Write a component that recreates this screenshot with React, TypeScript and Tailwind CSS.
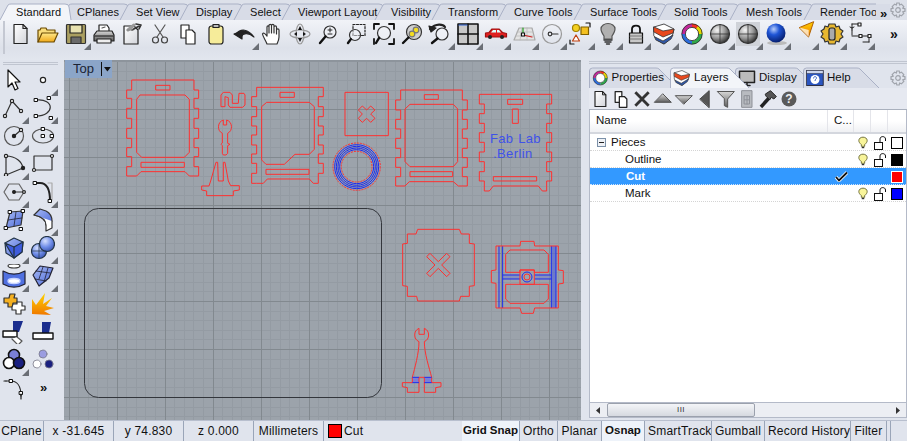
import React from "react";

const Defs = () => (
  <svg className="absolute w-0 h-0">
    <defs>
      <radialGradient id="gs" cx="35%" cy="30%" r="75%"><stop offset="0" stopColor="#f4f4f4" /><stop offset="0.55" stopColor="#9a9a9a" /><stop offset="1" stopColor="#2c2c2c" /></radialGradient>
      <radialGradient id="bs" cx="38%" cy="30%" r="75%"><stop offset="0" stopColor="#b7cdfb" /><stop offset="0.4" stopColor="#1f55d6" /><stop offset="1" stopColor="#041a66" /></radialGradient>
      <radialGradient id="ls" cx="38%" cy="30%" r="75%"><stop offset="0" stopColor="#d6e0ff" /><stop offset="0.55" stopColor="#6f8de8" /><stop offset="1" stopColor="#3a55b0" /></radialGradient>
      <linearGradient id="yl" x1="0" y1="0" x2="0" y2="1"><stop offset="0" stopColor="#ffe98a" /><stop offset="1" stopColor="#f0a818" /></linearGradient>
      <linearGradient id="wh" x1="0" y1="0" x2="1" y2="1"><stop offset="0" stopColor="#ffffff" /><stop offset="1" stopColor="#d2d4da" /></linearGradient>
      <linearGradient id="fl" x1="0" y1="0" x2="0" y2="1"><stop offset="0" stopColor="#ffd400" /><stop offset="1" stopColor="#f07800" /></linearGradient>
      <linearGradient id="bl" x1="0" y1="0" x2="1" y2="1"><stop offset="0" stopColor="#a8bbf5" /><stop offset="1" stopColor="#4c69d8" /></linearGradient>
      <linearGradient id="gr" x1="0" y1="0" x2="0" y2="1"><stop offset="0" stopColor="#d8d8d8" /><stop offset="1" stopColor="#5c5c5c" /></linearGradient>
    </defs>
  </svg>
);

const I = ({ children, s = 24 }: { children: React.ReactNode; s?: number }) => (
  <svg viewBox="0 0 24 24" width={s} height={s} fill="none" stroke="#222" strokeWidth="1.2" strokeLinejoin="round" strokeLinecap="round">
    {children}
  </svg>
);

const Mag = ({ x = 14, y = 10, r = 6 }: { x?: number; y?: number; r?: number }) => (
  <>
    <circle cx={x} cy={y} r={r} fill="#f4f6fa" fillOpacity="0.5" stroke="#333" />
    <path d={`M${x - r * 0.75} ${y + r * 0.75}L4 21`} stroke="#111" strokeWidth="2.4" />
  </>
);

const Ring = () => (
  <g strokeWidth="3.6" fill="none" strokeLinecap="butt">
    <path d="M12 3.5A8.5 8.5 0 0 1 20.5 12" stroke="#f6b400" />
    <path d="M20.5 12A8.5 8.5 0 0 1 12 20.5" stroke="#2fa84a" />
    <path d="M12 20.5A8.5 8.5 0 0 1 3.5 12" stroke="#2a6bdc" />
    <path d="M3.5 12A8.5 8.5 0 0 1 12 3.5" stroke="#c1279a" />
    <path d="M17 5.2A8.5 8.5 0 0 1 20.5 12" stroke="#e6d800" />
    <path d="M12 3.5A8.5 8.5 0 0 1 17 5.2" stroke="#f03020" />
    <circle cx="12" cy="12" r="10.2" stroke="#222" strokeWidth="0.8" />
    <circle cx="12" cy="12" r="6.6" stroke="#222" strokeWidth="0.8" fill="#fff" />
  </g>
);

const LayersIcon = () => (
  <g strokeWidth="0.8">
    <path d="M2 5L12 2L22 7L21 12C18 17 15 20 12 22C8 20 4 18 2 14Z" fill="#fff" stroke="#222" />
    <path d="M2 5L11 9L22 7L21 11L11 15L2 10Z" fill="#e8481c" stroke="#333" />
    <path d="M3 15L11 19L21 13L19 17L12 22L4 18Z" fill="#3058a8" stroke="#333" />
  </g>
);

const Sq = ({ x, y }: { x: number; y: number }) => <rect x={x - 1.5} y={y - 1.5} width="3" height="3" fill="#fff" stroke="#111" strokeWidth="1" />;

const top: [React.ReactNode, boolean][] = [
  [<I><path d="M6 2.5H15L19 6.5V21.5H6Z" fill="url(#wh)" /><path d="M15 2.5V6.5H19" /></I>, false],
  [<I><path d="M2 20V8H4L5 6H10L11 8H19V11" fill="#f9dd7c" stroke="#6b4a00" /><path d="M2 20L6 11H22L18 20Z" fill="url(#yl)" stroke="#6b4a00" /></I>, false],
  [<I><rect x="2.5" y="2.5" width="19" height="19" rx="1" fill="#aa9f60" stroke="#333" /><rect x="6" y="3" width="12" height="8" fill="#e8e2b0" /><rect x="7" y="15" width="10" height="6.5" fill="#6a6a6a" stroke="#333" /></I>, true],
  [<I><path d="M7 3H15L17 6V10H7Z" fill="#fff" /><path d="M10 6L13 5" stroke="#555" /><path d="M2 13L5 9H20L22 13V19H2Z" fill="url(#gr)" /><path d="M5 17H19V21H5Z" fill="#eee" /><path d="M3 14H21" stroke="#111" /></I>, false],
  [<I><path d="M4 4H14L18 8V22H4Z" fill="url(#wh)" /><path d="M8 8L14 3" stroke="#999" strokeWidth="3" /><path d="M12 8L21 3M21 3L16 2M21 3L19 7" stroke="#333" strokeWidth="1.6" /><path d="M7 8L13 8" stroke="#888" /></I>, false],
  [<I><path d="M7 3L15 15M17 3L9 15" stroke="#555" /><circle cx="7.5" cy="18" r="3" stroke="#444" /><circle cx="16.5" cy="18" r="3" stroke="#444" /></I>, false],
  [<I><path d="M5 3H13V16H5Z" fill="#fff" /><path d="M10 8H16L19 11V22H10Z" fill="#fff" /></I>, false],
  [<I><rect x="5" y="4" width="14" height="18" rx="2.5" fill="#f6ec9a" stroke="#222" /><rect x="9" y="2.5" width="6" height="3" fill="#bbb" /></I>, false],
  [<I><path d="M4 12C9 6 16 7 22 15C16 10 11 11 9 15Z" fill="#222" /><path d="M2 12L10 9V17Z" fill="#222" /></I>, true],
  [<I><path d="M7 22C6 19 3 15 2.5 12C3 10.5 4.5 11 7 14V5C7 3.5 9 3.5 9 5V11V3.5C9 2 11.5 2 11.5 3.5V11V3.5C11.5 2 14 2 14 3.5V11V5C14 3.5 16.5 3.5 16.5 5V12V8C16.5 6.5 19 6.5 19 8V15C19 18 18 20 17 22Z" fill="#fff" stroke="#333" /></I>, false],
  [<I><ellipse cx="12" cy="12" rx="10" ry="4" stroke="#999" /><ellipse cx="12" cy="12" rx="4" ry="10" stroke="#999" /><path d="M12 4L10 8H14ZM12 20L10 16H14ZM6 12L9 10V14ZM18 12L15 10V14Z" fill="#111" stroke="none" /></I>, false],
  [<I><Mag /><path d="M14 6V10M12 8H16M12 12H16" strokeWidth="1" /></I>, false],
  [<I><rect x="9" y="2.5" width="12" height="11" strokeDasharray="2 1.5" /><Mag x={11} y={13} r={5.5} /></I>, false],
  [<I><Mag x={12} y={11} r={6.5} /><path d="M2 7V2H7M17 2H22V7M22 17V22H17M2 17V22" strokeWidth="1.8" stroke="#111" /></I>, false],
  [<I><circle cx="14" cy="10" r="7.5" fill="#d0d0d0" stroke="#333" /><circle cx="16" cy="8" r="2.8" fill="#f4dc20" stroke="#777" /><circle cx="12" cy="12" r="2.8" fill="#f4dc20" stroke="#777" /><path d="M8.5 15.5L3 21" stroke="#111" strokeWidth="2.4" /></I>, false],
  [<I><path d="M2 7C8 1 15 2 17 5" stroke="#222" strokeWidth="2.2" /><path d="M1 4L3 10L8 6Z" fill="#222" /><Mag x={14} y={12} r={6} /></I>, true],
  [<I><rect x="2" y="2" width="20" height="20" fill="#c8c8c8" stroke="#111" strokeWidth="1.6" /><path d="M12 2V22M2 12H22" stroke="#111" strokeWidth="1.6" /><path d="M3 3H11" stroke="#2a5fd0" /></I>, true],
  [<I><path d="M1.5 15V11L5 10.5L8 7H15L18.5 10.5L22.5 11.5V15Z" fill="#e02020" stroke="#a01010" /><path d="M9 8H12V10.5H7ZM13 8H15L17 10.5H13Z" fill="#dff" stroke="none" /><circle cx="6" cy="15" r="2" fill="#222" stroke="none" /><circle cx="18" cy="15" r="2" fill="#222" stroke="none" /></I>, true],
  [<I><path d="M7 6H20L23 18H2Z" fill="#e4e4e4" stroke="#aaa" /><path d="M5 10H21M4 14H22M10 6L8 18M15 6L15 18" stroke="#bbb" strokeWidth="0.8" /><path d="M11 13L20 15" stroke="#d02020" /><path d="M11 13L11 6" stroke="#20a020" /><rect x="9.5" y="11" width="3" height="3" fill="#fff" stroke="#111" /></I>, true],
  [<I><circle cx="12" cy="12" r="9.5" stroke="#999" /><circle cx="10" cy="12" r="1.8" stroke="#333" /><path d="M12 12H18" stroke="#333" /></I>, true],
  [<I><circle cx="8" cy="6" r="3.5" fill="#f3d020" stroke="#a08000" /><rect x="13" y="5" width="7.5" height="7.5" fill="#f3c020" stroke="#806000" /><path d="M8 13L11.5 19H4.5Z" fill="#fff" stroke="#c04010" /><path d="M18 1H22V5M2 18V22H6" stroke="#111" /></I>, true],
  [<I><path d="M8 14C6 11 5 9 5 7C5 3.5 8.5 1.5 12 1.5C15.5 1.5 19 3.5 19 7C19 9 18 11 16 14V17H8Z" fill="#b0b0b0" stroke="#555" /><path d="M8 18H16M9 20H15M10.5 22H13.5" stroke="#333" strokeWidth="1.4" /></I>, true],
  [<I><path d="M8 11V7C8 2.5 16 2.5 16 7V11" stroke="#111" strokeWidth="1.8" /><rect x="5.5" y="11" width="13" height="10" fill="#c8c8c8" stroke="#111" /><path d="M6 14H18M6 17H18" stroke="#777" /></I>, true],
  [<I><LayersIcon /></I>, true],
  [<I><Ring /></I>, true],
  [<I><circle cx="12" cy="12" r="9.5" fill="url(#gs)" stroke="#333" /><path d="M12 2.5V21.5M2.5 12H21.5" stroke="#333" strokeWidth="0.8" /></I>, true],
  [<I><rect x="0" y="0" width="24" height="24" fill="#cfd2d8" stroke="none" /><circle cx="12" cy="12" r="9.5" fill="url(#gs)" stroke="#333" /><path d="M12 2.5V21.5M2.5 12H21.5" stroke="#333" strokeWidth="0.8" /></I>, true],
  [<I><ellipse cx="13" cy="21" rx="10" ry="2" fill="#bbb" stroke="none" /><circle cx="12" cy="11" r="9.5" fill="url(#bs)" stroke="none" /></I>, true],
  [<span className="ml-[5px] -mt-[8px] block"><I s={20}><path d="M3 9L20 2L14 20Z" fill="url(#fl)" stroke="#b06000" /><path d="M3 9L14 12L14 20Z" fill="#fff" fillOpacity="0.7" stroke="none" /></I></span>, true],
  [<I><path d="M9 2L15 2L16 5L19 4L20 7L23 9L21 12L23 15L20 17L19 20L16 19L15 22H9L8 19L5 20L4 17L1 15L3 12L1 9L4 7L5 4L8 5Z" fill="#e8b830" stroke="#333" /><rect x="9" y="6" width="6" height="12" rx="2" fill="#aaa" stroke="#222" /></I>, true],
  [<I><path d="M4 2H11M4 2V8M4 6L2 5M4 6L6 5M4 8V13M4 14H12M12 14H21V20M15 20H21" stroke="#222" strokeWidth="1" /><rect x="10" y="1" width="3" height="3" fill="#fff" /><rect x="11" y="12.5" width="3" height="3" fill="#fff" /><rect x="20" y="12.5" width="3" height="3" fill="#fff" /></I>, true],
];

const left: [React.ReactNode, boolean][] = [
  [<I><path d="M6 2V19L10 15L13 22L16 20.5L13 14H18Z" fill="#fff" stroke="#111" /></I>, false],
  [<I><circle cx="12" cy="12" r="2.6" fill="#fff" stroke="#222" /></I>, true],
  [<I><path d="M3 20L10 5L19 15" stroke="#333" /><circle cx="3" cy="20" r="1.6" fill="#fff" /><circle cx="10" cy="5" r="1.6" fill="#fff" /><circle cx="19" cy="15" r="1.6" fill="#fff" /></I>, true],
  [<I><path d="M5 4C24 2 24 20 5 20" stroke="#333" /><Sq x={5} y={4} /><Sq x={5} y={20} /><Sq x={18} y={2} /><Sq x={20} y={22} /></I>, true],
  [<I><circle cx="12" cy="12" r="9.5" stroke="#555" /><path d="M12 12L19 6" stroke="#333" /><circle cx="12" cy="12" r="1.6" fill="#222" /><circle cx="19" cy="6" r="1.6" fill="#fff" /></I>, true],
  [<I><ellipse cx="12" cy="12" rx="10.5" ry="7" stroke="#555" /><Sq x={12} y={5} /><Sq x={12} y={12} /><Sq x={21} y={12} /></I>, true],
  [<I><path d="M4 4C14 4 20 10 21 16L4 23Z" stroke="#333" /><circle cx="4" cy="4" r="1.6" fill="#fff" /><circle cx="21" cy="16" r="1.6" fill="#222" /><circle cx="4" cy="23" r="1.6" fill="#fff" /></I>, true],
  [<I><rect x="3" y="4" width="18" height="14" stroke="#333" /><circle cx="21" cy="4" r="1.5" fill="#fff" /><circle cx="3" cy="18" r="1.5" fill="#fff" /></I>, false],
  [<I><path d="M7 4H17L22 12L17 20H7L2 12Z" stroke="#666" /><path d="M12 12H22" stroke="#333" /><circle cx="12" cy="12" r="1.4" fill="#222" /><circle cx="22" cy="12" r="1.4" fill="#fff" /></I>, true],
  [<I><path d="M17 3H21V20" stroke="#aaa" /><path d="M4 3H9C16 3 19 10 19 21" stroke="#222" strokeWidth="2" /><Sq x={4} y={3} /><Sq x={19} y={21} /></I>, true],
  [<I><path d="M8 4L21 3L19 17L4 20Z" fill="url(#bl)" stroke="#333" /><path d="M6 12L20 10M14 4L12 18" stroke="#223" strokeWidth="0.8" /><Sq x={8} y={4} /><Sq x={21} y={3} /><Sq x={4} y={20} /><Sq x={19} y={21} /></I>, false],
  [<I><path d="M3 7L9 1L15 3C19 5 21 9 21 13L15 17C15 12 12 9 3 7Z" fill="url(#bl)" stroke="#333" /><path d="M3 7C12 9 15 12 15 17V23L21 20V13" fill="#fff" stroke="#333" /></I>, true],
  [<I><path d="M3 7L12 2L21 6L20 16L12 22L4 17Z" fill="url(#bl)" stroke="#234" /><path d="M3 7L12 11L21 6L20 16L12 22Z" fill="#3e5cdc" stroke="#234" /><path d="M12 11V22" stroke="#234" /></I>, true],
  [<I><circle cx="8" cy="15" r="7.5" fill="url(#ls)" stroke="#234" /><circle cx="16" cy="8" r="7.5" fill="url(#ls)" stroke="#234" /><path d="M1 15H15M8 8V22" stroke="#234" strokeWidth="0.7" /></I>, true],
  [<I><ellipse cx="12" cy="2" rx="6" ry="2" fill="#fff" stroke="#333" /><path d="M1 7C8 11 16 11 23 7V20C16 24 8 24 1 20Z" fill="#5070e0" stroke="#223" /><ellipse cx="12" cy="17" rx="6" ry="2.5" fill="#fff" stroke="#c8d4ff" strokeWidth="1.4" /></I>, true],
  [<I><path d="M2 11L9 2L22 4L18 14L8 22Z" fill="url(#bl)" stroke="#223" /><path d="M5 7L19 9M4 15L15 17M12 3L8 15M17 4L13 18" stroke="#223" strokeWidth="0.8" /></I>, true],
  [<I><path d="M2 6H7L8 2H13L12 6H15V11H11V15H6V11H2Z" fill="#f5b020" stroke="#333" /><path d="M11 12H15V10H20V14H23V18H19V22H14V18H10V15Z" fill="#fff" stroke="#333" /></I>, false],
  [<I><path d="M1 22V7L5 13L14 1L12 12L21 6L15 14L23 16L13 19L20 23Z" fill="url(#fl)" stroke="none" /></I>, false],
  [<I><path d="M11 1H21L17 12H11Z" fill="#1a2d8e" stroke="none" /><rect x="1" y="11" width="14" height="6" fill="#fff" stroke="#111" strokeWidth="1.4" /><path d="M15 17L20 21L16 25L10 19" fill="#fff" stroke="#555" /></I>, false],
  [<I><path d="M11 2H20L18 13H11Z" fill="#1a2d8e" stroke="none" /><rect x="2" y="13" width="20" height="6" fill="#fff" stroke="#111" strokeWidth="1.4" /></I>, false],
  [<I><circle cx="12" cy="7" r="5.5" fill="#7a80d8" stroke="#111" strokeWidth="1.6" /><circle cx="7" cy="15" r="5.5" fill="#fff" stroke="#111" strokeWidth="1.6" /><circle cx="17" cy="15" r="5.5" fill="#1a2080" stroke="#111" strokeWidth="1.6" /></I>, true],
  [<I><circle cx="12" cy="6" r="4" fill="#9a9ce0" stroke="#778" strokeWidth="0.8" /><circle cx="6" cy="16" r="4" fill="#fff" stroke="#778" strokeWidth="0.8" /><circle cx="18" cy="16" r="4" fill="#1a2080" stroke="#778" strokeWidth="0.8" /></I>, false],
  [<I><path d="M4 5H9C15 5 19 10 19 20" stroke="#222" /><Sq x={9} y={5} /><Sq x={19} y={17} /><path d="M19 18V23M4 5H2" stroke="#222" /></I>, false],
  [<span className="text-[13px] font-bold text-[#111] tracking-[-1px]">»</span>, false],
];

const Slot = ({ icon, mark }: { icon: React.ReactNode; mark: boolean }) => (
  <div className="relative w-[28px] h-[28px] flex items-center justify-center shrink-0">
    {icon}
    {mark && (
      <svg className="absolute right-[-1px] bottom-[-2px] z-10" width="7" height="7" viewBox="0 0 7 7">
        <path d="M7 0V7H0Z" fill="#6a6e75" />
      </svg>
    )}
  </div>
);

const tabs: [string, string, number][] = [
  ["Standard", "w-[61px]", 61], ["CPlanes", "w-[59px]", 59], ["Set View", "w-[60px]", 60], ["Display", "w-[54px]", 54], ["Select", "w-[48px]", 48],
  ["Viewport Layout", "w-[93px]", 93], ["Visibility", "w-[57px]", 57], ["Transform", "w-[66px]", 66], ["Curve Tools", "w-[76px]", 76], ["Surface Tools", "w-[84px]", 84],
  ["Solid Tools", "w-[72px]", 72], ["Mesh Tools", "w-[74px]", 74], ["Render Tools", "w-[74px]", 74],
];

const TopTab = ({ label, w, cls, active }: { label: string; w: number; cls: string; active: boolean }) => (
  <div className={`relative h-[20px] shrink-0 pl-[16px] ${cls} ${active ? "z-10" : ""}`}>
    <svg className="absolute left-0 top-0 overflow-visible" width={w} height="20">
      <path
        d={`M0 20L8 5Q9 4 11 4H${w + 4}Q${w + 8} 4 ${w + 8} 7${active ? `L${w + 10} 20` : `V20`}`}
        fill={active ? "#f3f5f9" : "#d8dce7"}
        stroke="#aab1c6"
      />
    </svg>
    <span className="relative block pt-[5px] text-[11px] leading-[14px] tracking-[0.05px] text-[#111] whitespace-nowrap">{label}</span>
  </div>
);

const PanelTab = ({ w, cls, icon, label, active }: { w: number; cls: string; icon: React.ReactNode; label: string; active?: boolean }) => (
  <div className={`relative h-[21px] shrink-0 ${cls} ${active ? "z-10" : ""}`}>
    <svg className="absolute left-0 top-0 overflow-visible" width={w} height="21">
      <path
        d={`M0.5 21V4Q0.5 1 3.5 1H${w - 8}Q${w - 6} 1 ${w - 5} 2L${w + 14} 21`}
        fill={active ? "#f3f5f9" : "#d8dce7"}
        stroke="#aab1c6"
      />
    </svg>
    <div className="relative flex items-center h-full pl-[3px] gap-[3px] text-[11.5px] text-[#111]">
      {icon}
      <span>{label}</span>
    </div>
  </div>
);

const LeftA = "M215 75L215 105L200 105L200 130L215 130L215 160L200 160L200 190L215 190L215 220L200 220L200 250L215 250L215 278L200 278L200 305L215 305L215 335L200 335L200 363L230 363L243 350L375 350L388 363L416 363L416 335L402 335L402 305L416 305L416 278L402 278L402 250L416 250L416 220L402 220L402 190L416 190L416 160L402 160L402 130L416 130L416 105L402 105L402 75Z";
const B = "M590 97L590 125L575 125L575 155L590 155L590 185L575 185L575 213L590 213L590 240L575 240L575 270L590 270L590 297L575 297L575 325L590 325L590 355L575 355L575 385L590 385L610 385L622 372L748 372L760 385L775 385L775 355L790 355L790 325L775 325L775 297L790 297L790 270L775 270L775 240L790 240L790 213L775 213L775 185L790 185L790 155L775 155L775 125L790 125L790 97Z";
const C = "M212 30L212 60L197 60L197 90L212 90L212 118L197 118L197 147L212 147L212 175L197 175L197 205L212 205L212 233L197 233L197 262L212 262L212 290L197 290L197 318L225 318L238 305L370 305L385 318L412 318L412 290L397 290L397 262L412 262L412 233L397 233L397 205L412 205L412 175L397 175L397 147L412 147L412 118L397 118L397 90L412 90L412 60L397 60L397 30Z";
const D = "M448 43L448 72L463 72L463 101L448 101L448 130L463 130L463 158L448 158L448 187L463 187L463 216L448 216L448 245L463 245L463 275L448 275L448 303L463 303L463 333L478 333L490 318L625 318L637 333L650 333L650 303L665 303L665 275L650 275L650 245L665 245L665 216L650 216L650 187L665 187L665 158L650 158L650 130L665 130L665 101L650 101L650 72L665 72L665 43Z";

const P = (p: React.SVGProps<SVGPathElement>) => <path vectorEffect="non-scaling-stroke" {...p} />;

const Drawing = () => {
  const vx: number[] = [];
  for (let x = 69 - 0.4; x < 590; x += 9.6) vx.push(Math.round(x));
  const hy: number[] = [];
  for (let y = 61; y < 425; y += 9.6) hy.push(Math.round(y));
  return (
    <svg viewBox="64 60 517 360" className="block w-full h-full" fill="none">
      <rect x="64" y="60" width="517" height="360" fill="#9ca3ab" />
      {vx.map((x) => <path key={x} d={`M${x + 0.5} 60V420`} stroke="#949ba3" />)}
      {hy.map((y) => <path key={y} d={`M64 ${y + 0.5}H581`} stroke="#949ba3" />)}
      {[69, 117, 165, 213, 261, 309, 357, 405, 453, 501, 549].map((x) => <path key={x} d={`M${x + 0.5} 60V420`} stroke="#82898f" />)}
      {[109, 157, 205, 253, 301, 349, 397].map((y) => <path key={y} d={`M64 ${y + 0.5}H581`} stroke="#82898f" />)}
      <rect x="64" y="60" width="517" height="2" fill="#8d949c" />
      <rect x="84.5" y="208.5" width="297" height="189" rx="14" stroke="#33363c" />

      <g transform="translate(60 55) scale(0.3333)" stroke="#ff3030" strokeWidth="1">
        <P d={LeftA} />
        <P d="M240 120L375 120L388 133L388 292L373 307L245 307L230 292L230 133Z" />
        <P d="M287 91H330V105H287ZM243 322H373V337H243Z" />
        <P d="M483 155L483 120L490 112L510 112L517 120L517 145L535 145L537 115L552 115L555 120L555 150L548 157L510 157L505 150L505 128L495 125L495 155Z" />
        <P d="M490 195L490 210L500 210L500 195A22 22 0 0 1 503 235L503 265L510 268L503 272L503 295L498 300L490 300L487 295L487 272L483 268L487 264L487 235A22 22 0 0 1 490 195Z" />
        <P d="M468 322L452 378L447 393L425 393L425 405L440 408L440 422L520 422L520 408L538 405L538 392L512 392L505 378L495 322L490 322L490 378L475 378L473 322Z" />
        <P d={B} />
        <P d="M620 142L748 142L763 155L763 283L748 298L705 298L673 328L618 328L605 315L605 155Z" />
        <P d="M660 112H703V127H660ZM618 343H747V358H618Z" />
      </g>

      <g transform="translate(330 80) scale(0.3333)" stroke="#ff3030" strokeWidth="1">
        <P d="M45 37H175V167H45Z" />
        <P d="M97 78L110 90L122 78L135 90L122 102L135 115L122 127L110 115L97 127L85 115L97 102L85 90Z" />
        <P d={C} />
        <P d="M240 73L370 73L383 87L383 245L370 260L240 260L225 245L225 87Z" />
        <P d="M283 44H325V58H283ZM240 275H368V290H240Z" />
        <P d={D} />
        <P d="M533 58H578V73H533ZM547 87H565V130H547ZM490 290H620V303H490Z" />
        <circle cx="80" cy="260" r="71" vectorEffect="non-scaling-stroke" strokeDasharray="2 1" />
        <circle cx="80" cy="260" r="46" vectorEffect="non-scaling-stroke" strokeDasharray="2 1" />
        <circle cx="80" cy="260" r="66" stroke="#1c2cf0" vectorEffect="non-scaling-stroke" />
        <circle cx="80" cy="260" r="61" stroke="#1c2cf0" vectorEffect="non-scaling-stroke" />
        <circle cx="80" cy="260" r="56" stroke="#1c2cf0" vectorEffect="non-scaling-stroke" />
        <circle cx="80" cy="260" r="51" stroke="#1c2cf0" vectorEffect="non-scaling-stroke" />
      </g>

      <text x="490" y="143" fill="#3f52e8" fontSize="13" letterSpacing="0.3" wordSpacing="1" fontFamily="Liberation Sans, sans-serif">Fab Lab</text>
      <text x="493" y="158" fill="#3f52e8" fontSize="13" letterSpacing="0.4" fontFamily="Liberation Sans, sans-serif">.Berlin</text>

      <g transform="translate(390 220) scale(0.3333)" stroke="#ff3030" strokeWidth="1">
        <P d="M83 28L208 28L214 42L238 42L238 70L253 72L253 197L238 199L238 229L212 229L208 243L83 243L80 229L52 229L52 199L38 197L38 72L52 70L52 42L78 42Z" />
        <P d="M120 100L145 125L170 100L180 110L155 135L180 160L170 170L145 145L120 170L110 160L135 135L110 110Z" />
        <path d="M484 78H498V264H484Z" fill="#5a68d8" fillOpacity="0.7" stroke="none" />
        <path d="M338 165H390V177H338ZM433 165H484V177H433Z" fill="#7a86c8" fillOpacity="0.6" stroke="none" />
        <P d="M327 78V264M338 78V264M484 78V264M498 78V264M338 165H390M338 177H390M433 165H484M433 177H484" stroke="#1c2cf0" />
        <P d="M318 78L390 78L392 64L432 64L434 78L505 78L505 150L520 152L520 190L505 192L505 264L434 264L430 280L395 280L390 264L318 264L318 190L304 188L304 152L318 150Z" />
        <P d="M347 103L360 90L462 90L475 103L475 157L433 157L433 150L390 150L390 157L347 157Z" />
        <P d="M347 193L475 193L475 237L462 250L360 250L347 237Z" />
        <P d="M390 150H433V193H390Z" />
        <circle cx="411" cy="171" r="15" stroke="#1c2cf0" vectorEffect="non-scaling-stroke" />
        <circle cx="411" cy="171" r="9" vectorEffect="non-scaling-stroke" />
        <path d="M67 472H87V488H67ZM103 472H125V488H103Z" fill="#7a7ed8" stroke="none" />
        <P d="M87 325L87 343L103 343L103 325A22 22 0 0 1 103 365C103 400 118 445 125 472L125 488L153 488L153 500L137 503L137 517L103 517L103 472L87 472L87 517L52 517L52 503L37 500L37 488L67 488L67 472C74 445 87 400 87 365A22 22 0 0 1 87 325Z" />
        <P d="M67 472H87M103 472H125M67 488H87M103 488H125" stroke="#1c2cf0" />
      </g>
    </svg>
  );
};

const ptool: React.ReactNode[] = [
  <I s={20}><path d="M6 3H15L19 7V21H6Z" fill="url(#wh)" stroke="#222" strokeWidth="1.4" /><path d="M15 3V7H19" /></I>,
  <I s={20}><path d="M5 3H13V16H5Z" fill="#fff" strokeWidth="1.5" /><path d="M10 9H16L19 12V22H10Z" fill="#fff" strokeWidth="1.5" /></I>,
  <I s={20}><path d="M4 4L20 20M20 4L4 20" stroke="#333" strokeWidth="3.4" strokeLinecap="butt" /></I>,
  <I s={20}><path d="M12 6L22 16H2Z" fill="url(#gr)" stroke="#555" /></I>,
  <I s={20}><path d="M12 18L22 8H2Z" fill="url(#gr)" stroke="#555" /></I>,
  <I s={20}><path d="M6 12L17 2V22Z" fill="#555" stroke="#444" /></I>,
  <I s={20}><path d="M2 3H22L14 12V22L10 20V12Z" fill="url(#gr)" stroke="#555" /></I>,
  <I s={20}><path d="M6 2H18V22H6Z" fill="#b8bbc0" stroke="#8e9198" /><path d="M9 8H15V18H9ZM12 8V18M9 13H15" stroke="#8e9198" /></I>,
  <I s={20}><path d="M2 20L12 9L15 12L5 23Z" fill="#222" stroke="none" /><path d="M9 6L15 2L22 9L19 12L16 10L14 13L10 9Z" fill="#555" stroke="#222" /></I>,
  <svg width="18" height="18" viewBox="0 0 18 18"><circle cx="9" cy="9" r="7.5" fill="#5a5a5a" /><text x="9" y="13" textAnchor="middle" fontSize="12" fontWeight="bold" fill="#eee" fontFamily="Liberation Sans, sans-serif">?</text></svg>,
];

const Bulb = () => (
  <svg width="10" height="14" viewBox="0 0 12 16" fill="none">
    <path d="M4 10C2 8 1 7 1 5C1 2.5 3.3 1 6 1C8.7 1 11 2.5 11 5C11 7 10 8 8 10V12H4Z" fill="#f8f49a" stroke="#5a5a20" />
    <path d="M4.5 13.5H7.5" stroke="#333" strokeWidth="1.5" />
  </svg>
);
const Lock = () => (
  <svg width="14" height="16" viewBox="0 0 14 16" fill="none" stroke="#111">
    <rect x="1.5" y="7.5" width="8" height="7" fill="#fff" />
    <path d="M7 7.5V4C7 0.8 12.5 0.8 12.5 4V6" />
  </svg>
);

const Row = ({ label, pl, color, sel, tree }: { label: string; pl: string; color: string; sel?: boolean; tree?: boolean }) => (
  <div className={`relative flex items-center h-[17px] pt-[1px] border-b border-dotted ${sel ? "bg-[#3399ff] border-[#cfe4fb] text-white font-bold" : "border-[#d4d4d4] text-[#111]"}`}>
    {tree && (
      <span className="absolute left-[7px] top-[4px] w-[9px] h-[9px] border border-[#7b90a8] bg-[#eef1f6] flex items-center justify-center">
        <span className="block w-[5px] h-px bg-[#222]" />
      </span>
    )}
    <span className={`${pl} w-[238px] shrink-0`}>{label}</span>
    <span className="w-[26px] shrink-0 flex justify-center pl-[1px]">
      {sel && (
        <svg width="13" height="11" viewBox="0 0 13 11" fill="none"><path d="M1 6L4 9.5L12 1.5" stroke="#fff" strokeWidth="3.4" /><path d="M1 6L4 9.5L12 1.5" stroke="#111" strokeWidth="1.8" /></svg>
      )}
    </span>
    <span className="w-[17px] shrink-0 flex justify-center">{!sel && <Bulb />}</span>
    <span className="w-[17px] shrink-0 flex justify-center">{!sel && <Lock />}</span>
    <span className="shrink-0 pl-[3px]">
      <span className={`block w-[12px] h-[12px] border ${sel ? "border-white" : "border-black"} ${color}`} />
    </span>
  </div>
);

const Cell = ({ t, cls, bold }: { t: string; cls: string; bold?: boolean }) => (
  <div className={`h-full flex items-center justify-center border-r border-[#9aa5b8] overflow-hidden whitespace-nowrap shrink-0 ${cls} ${bold ? "font-bold tracking-normal text-[11.5px] bg-[#eef3fa]" : ""}`}>
    {t}
  </div>
);

function Gear() {
  return (
    <svg width="16" height="16" viewBox="0 0 16 16" fill="none" stroke="#a0a4ac" strokeWidth="1.2">
      <circle cx="8" cy="8" r="2.3" />
      <path d="M6.8 1H9.2L9.6 3L11.4 2.2L13.8 4.6L12.8 6.2L15 6.8V9.2L12.8 9.8L13.8 11.4L11.4 13.8L9.6 13L9.2 15H6.8L6.4 13L4.6 13.8L2.2 11.4L3.2 9.8L1 9.2V6.8L3.2 6.2L2.2 4.6L4.6 2.2L6.4 3Z" />
    </svg>
  );
}

export default function App() {
  return (
    <div className="relative w-[907px] h-[441px] overflow-hidden flex flex-col bg-[#e0e4ed] font-['Liberation_Sans',sans-serif] text-[#111]">
      <Defs />
      {/* ribbon tabs */}
      <div className="flex h-[20px] shrink-0 bg-[#dde1ea]">
        <div className="flex w-[876px] overflow-hidden shrink-0 h-[24px]">
          {tabs.map(([t, c, w], i) => (
            <TopTab key={t} label={t} cls={c} w={w} active={i === 0} />
          ))}
        </div>
        <div className="w-[14px] shrink-0 text-[13px] leading-[14px] font-bold pt-[3px] pl-[4px] bg-[#d8dce7] h-[16px] mt-[4px] tracking-[-1px]">»</div>
        <div className="pt-[2px] shrink-0">
          <Gear />
        </div>
      </div>
      {/* toolbar */}
      <div className="h-[40px] shrink-0 flex bg-[linear-gradient(#f1f3f8,#dde1ea_70%,#e2e6ee)]">
        <div className="w-[2px] h-[33px] mt-[1px] ml-[3px] mr-px border-x border-[#c4c8d2]" />
        <div className="flex">
          {top.map(([ic, m], i) => (
            <Slot key={i} icon={ic} mark={m} />
          ))}
        </div>
        <div className="ml-[16px] h-[28px] flex items-center text-[14px] font-bold tracking-[-1px]">»</div>
      </div>
      {/* main */}
      <div className="flex h-[360px] shrink-0">
        <div className="w-[64px] shrink-0 pt-[2px]">
          <div className="ml-[3px] w-[55px] h-[3px] border-y border-[#c0c5d0]" />
          <div className="grid grid-cols-[29px_29px] mt-[1px]">
            {left.map(([ic, m], i) => (
              <Slot key={i} icon={ic} mark={m} />
            ))}
          </div>
        </div>
        <div className="relative w-[517px] shrink-0">
          <Drawing />
          <div className="absolute left-[1px] top-0 h-[18px] w-[47px] bg-[#8ba5c8] flex items-center text-[13px] text-[#1a2333] pl-[8px]">
            <span className="w-[29px]">Top</span>
            <span className="w-px h-[14px] bg-[#111]" />
            <svg className="ml-[2px]" width="8" height="5" viewBox="0 0 8 5"><path d="M0 0H7L3.5 4.5Z" fill="#111" /></svg>
          </div>
        </div>
        <div className="w-[8px] shrink-0" />
        <div className="w-[318px] shrink-0 flex flex-col h-[358px]">
          <div className="h-[7px] shrink-0 pt-[1px]">
            <div className="h-[3px] border-y border-[#c0c5d0]" />
          </div>
          <div className="flex h-[21px] shrink-0 relative">
            <PanelTab w={75} cls="w-[75px]" label="Properties" icon={<I s={18}><Ring /></I>} />
            <div className="w-[6px]" />
            <PanelTab w={65} cls="w-[65px]" active label="Layers" icon={<I s={18}><LayersIcon /></I>} />
            <PanelTab w={68} cls="w-[68px]" label="Display" icon={<I s={18}><rect x="2" y="3" width="20" height="15" fill="#bbb" stroke="#222" strokeWidth="2" /><path d="M8 22H16M12 18V22" strokeWidth="2" /></I>} />
            <PanelTab w={62} cls="w-[62px]" label="Help" icon={<I s={18}><rect x="1" y="2" width="22" height="20" fill="#2a55c0" stroke="#223" /><rect x="1" y="2" width="22" height="4" fill="#cdd6ec" stroke="#223" strokeWidth="0.6" /><circle cx="12" cy="14" r="6" fill="#fff" stroke="none" /><path d="M10 12C10 9.5 14 9.5 14 12C14 13.5 12 13.5 12 15.5" stroke="#2a55c0" /></I>} />
            <div className="ml-[25px] mt-[3px]"><Gear /></div>
          </div>
          <div className="flex items-center h-[22px] shrink-0 border-b border-[#a9b0bd] bg-[#e6e9f1]">
            {ptool.map((ic, i) => (
              <div key={i} className="w-[21px] flex justify-center shrink-0">{ic}</div>
            ))}
          </div>
          <div className="flex-1 bg-white border-x border-[#b4bac8] text-[11.5px] flex flex-col">
            <div className="flex h-[24px] items-center border-b-2 border-[#d4d7de] bg-[linear-gradient(#ffffff,#ffffff_50%,#f0f1f4)]">
              <span className="w-[238px] pl-[6px] border-r border-[#e4e5ea] h-full flex items-center">Name</span>
              <span className="w-[26px] pl-[6px] border-r border-[#e4e5ea] h-full flex items-center">C...</span>
              <span className="w-[17px] border-r border-[#e4e5ea] h-full" />
              <span className="w-[17px] border-r border-[#e4e5ea] h-full" />
            </div>
            <div>
              <Row label="Pieces" pl="pl-[21px]" color="bg-white" tree />
              <Row label="Outline" pl="pl-[35px]" color="bg-black" />
              <Row label="Cut" pl="pl-[36px]" color="bg-[#ff0000]" sel />
              <Row label="Mark" pl="pl-[35px]" color="bg-[#0000ff]" />
            </div>
          </div>
          <div className="h-[16px] shrink-0 bg-[#eceef3] border border-[#b4bac8] flex items-center relative">
            <svg className="ml-[6px]" width="5" height="7" viewBox="0 0 5 7"><path d="M4 0V7L0 3.5Z" fill="#333" /></svg>
            <div className="ml-[6px] w-[148px] h-[14px] rounded-[2px] border border-[#9ba1ad] bg-[linear-gradient(#f4f5f8,#d6d9e0)] flex items-center justify-center text-[8px] leading-none text-[#333] tracking-[0.5px]">III</div>
            <div className="flex-1" />
            <svg className="mr-[6px]" width="5" height="7" viewBox="0 0 5 7"><path d="M1 0V7L5 3.5Z" fill="#333" /></svg>
          </div>
        </div>
      </div>
      {/* status */}
      <div className="flex h-[21px] shrink-0 border-t border-[#b8bfce] text-[12px] tracking-[0.2px] bg-[#e0e4ed]">
        <Cell t="CPlane" cls="w-[44px]" />
        <Cell t="x -31.645" cls="w-[70px]" />
        <Cell t="y 74.830" cls="w-[70px]" />
        <Cell t="z 0.000" cls="w-[70px]" />
        <Cell t="Millimeters" cls="w-[70px]" />
        <div className="w-[138px] h-full flex items-center pl-[4px] gap-[2px] shrink-0">
          <span className="block w-[14px] h-[14px] bg-[#ff0000] border border-black" />
          <span>Cut</span>
        </div>
        <Cell t="Grid Snap" cls="w-[58px]" bold />
        <Cell t="Ortho" cls="w-[38px]" />
        <Cell t="Planar" cls="w-[44px]" />
        <Cell t="Osnap" cls="w-[43px]" bold />
        <Cell t="SmartTrack" cls="w-[67px] justify-start pl-[3px]" />
        <Cell t="Gumball" cls="w-[53px]" />
        <Cell t="Record History" cls="w-[86px] justify-start pl-[3px]" />
        <Cell t="Filter" cls="w-[36px]" />
        <Cell t="" cls="w-[4px]" />
      </div>
    </div>
  );
}
